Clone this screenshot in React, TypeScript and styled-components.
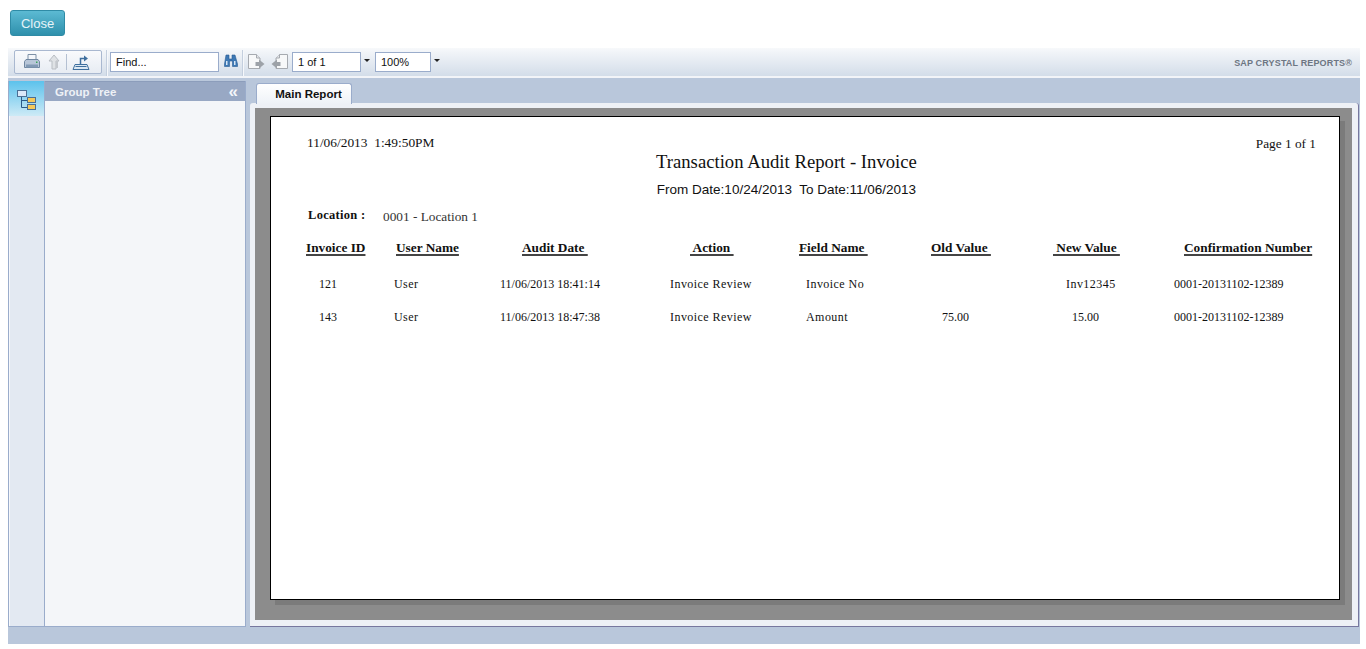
import React from 'react';
import styled, { createGlobalStyle } from 'styled-components';

const GlobalStyle = createGlobalStyle`
  * { box-sizing: border-box; }
  html, body { margin: 0; padding: 0; background: #fff; }
  body { font-family: "Liberation Sans", Arial, sans-serif; }
`;

const Page = styled.div`
  width: 1366px;
  height: 649px;
  overflow: hidden;
`;

const TopBar = styled.div`
  height: 48px;
  padding: 10px 0 0 10px;
`;

const CloseButton = styled.button`
  display: block;
  width: 55px;
  height: 26px;
  padding: 0;
  border: 1px solid #2f8ba6;
  border-radius: 3px;
  background: linear-gradient(#5cbad3, #2e90ac);
  color: #e6f4f8;
  font: 13px "Liberation Sans", Arial, sans-serif;
`;

const Viewer = styled.div`
  width: 1352px;
  margin-left: 8px;
  height: 596px;
  display: flex;
  flex-direction: column;
`;

const Toolbar = styled.div`
  flex: 0 0 30px;
  display: flex;
  align-items: flex-start;
  padding: 2px 0 0 6px;
  background: linear-gradient(#f7f9fb, #f1f4f8 15%, #d3dde9);
  border-bottom: 2px solid #f2f4f8;
  box-shadow: 0 1px 0 #aebdd4;
`;

const ButtonGroup = styled.div`
  width: 88px;
  height: 24px;
  display: flex;
  align-items: center;
  gap: 5px;
  padding-left: 8px;
  border: 1px solid #a9b8d0;
  border-radius: 2px;
  background: linear-gradient(#f9fafc, #e7ecf3);
`;

const GroupDivider = styled.span`
  width: 1px;
  height: 16px;
  margin-left: -1px;
  background: #b4c0d2;
`;

const Separator = styled.span<{ $after: number }>`
  flex: none;
  width: 1px;
  height: 26px;
  margin: 0 ${(p) => p.$after}px 0 4px;
  background: #c4cfde;
  box-shadow: 1px 0 0 #f6f8fb;
`;

const ToolInput = styled.div<{ $width: number; $left?: number }>`
  flex: none;
  width: ${(p) => p.$width}px;
  height: 20px;
  margin: 2px 0 0 ${(p) => p.$left ?? 0}px;
  padding-left: 5px;
  border: 1px solid #9aaccb;
  background: #fff;
  color: #111;
  font-size: 11px;
  line-height: 18px;
`;

const IconSlot = styled.span<{ $left: number; $width: number }>`
  flex: none;
  display: flex;
  width: ${(p) => p.$width}px;
  margin: 3px 0 0 ${(p) => p.$left}px;
`;

const DropArrow = styled.span<{ $left: number }>`
  flex: none;
  width: 0;
  height: 0;
  margin: 9px 0 0 ${(p) => p.$left}px;
  border-left: 3px solid transparent;
  border-right: 3px solid transparent;
  border-top: 3px solid #222;
`;

const Brand = styled.div`
  margin: 8px 8px 0 auto;
  color: #6d7683;
  font-size: 9px;
  font-weight: bold;
  letter-spacing: 0.15px;
  line-height: 11px;
  white-space: nowrap;
`;

const Main = styled.div`
  flex: 1;
  display: flex;
  background: #b9c7db;
  padding-top: 3px;
`;

const SideStrip = styled.div`
  flex: 0 0 37px;
  border: 1px solid #9aaccb;
  border-top: 0;
  background: #e3e9f2;
  box-shadow: inset 1px 0 0 #f6f8fb;
`;

const StripTile = styled.div`
  height: 35px;
  display: flex;
  align-items: center;
  justify-content: center;
  background: linear-gradient(#5cc2ec, #cdeaf6);
`;

const TreePanel = styled.div`
  flex: 0 0 201px;
  display: flex;
  flex-direction: column;
  border-right: 1px solid #9aaccb;
  border-bottom: 1px solid #9aaccb;
  background: #f4f6f9;
`;

const TreeHeader = styled.div`
  height: 20px;
  display: flex;
  align-items: center;
  justify-content: space-between;
  padding: 0 7px 0 10px;
  background: #98a8c4;
  border-top: 1px solid #8c9dbb;
  color: #eef1f6;
  font-size: 11.5px;
  font-weight: bold;
`;

const Collapse = styled.span`
  font-size: 17px;
  font-weight: bold;
  line-height: 14px;
  color: #f4f6fa;
`;

const ReportArea = styled.div`
  flex: 1;
  display: flex;
  flex-direction: column;
  padding: 2px 1px 0 4px;
`;

const TabRow = styled.div`
  height: 20px;
  padding-left: 6px;
  display: flex;
`;

const Tab = styled.div`
  width: 96px;
  height: 21px;
  border: 1px solid #9aaccb;
  border-bottom: 0;
  border-radius: 3px 3px 0 0;
  background: linear-gradient(#fff, #eef2f7);
  color: #111;
  font-size: 11.5px;
  font-weight: bold;
  line-height: 20px;
  text-align: center;
  padding-left: 9px;
  z-index: 1;
`;

const ReportFrame = styled.div`
  height: 524px;
  padding: 5px 6px 6px 5px;
  background: #eef1f6;
  border-radius: 3px 3px 0 0;
  border-bottom: 1px solid #77789f;
  border-right: 1px solid #77789f;
`;

const GreyDesk = styled.div`
  height: 100%;
  padding: 8px 12px 0 15px;
  background: #8c8c8c;
`;

const ReportSheet = styled.div`
  height: 484px;
  padding: 0 23px 0 35px;
  border: 1px solid #000;
  background: #fff;
  box-shadow: 5px 5px 0 #7b7b7b;
  color: #111;
  font-family: "Liberation Serif", "Times New Roman", serif;
  font-size: 12px;
`;

const HeadBlock = styled.div`
  height: 91px;
  display: grid;
  grid-template-columns: 350px auto 1fr;
`;

const Stamp = styled.div`
  padding: 19px 0 0 1px;
  font-size: 13.4px;
  line-height: 14px;
  white-space: pre;
`;

const TitleBlock = styled.div`
  text-align: center;
  padding-top: 34px;
`;

const ReportTitle = styled.div`
  font-size: 18.7px;
  line-height: 22px;
  white-space: nowrap;
`;

const DateRange = styled.div`
  margin-top: 10px;
  font-family: "Liberation Sans", Arial, sans-serif;
  font-size: 13.5px;
  line-height: 14px;
  white-space: pre;
`;

const PageNumber = styled.div`
  padding-top: 20px;
  text-align: right;
  font-size: 13.3px;
  line-height: 14px;
`;

const LocationRow = styled.div`
  display: flex;
  height: 34px;
  padding-left: 2px;
  line-height: 14px;
`;

const LocationLabel = styled.b`
  width: 75px;
  font-size: 12.5px;
  letter-spacing: 0.3px;
`;

const LocationValue = styled.span`
  padding-top: 2px;
  font-size: 13.3px;
  color: #333;
`;

const ReportTable = styled.div`
  display: grid;
  grid-template-columns: 88px 106px 170px 129px 132px 122px 121px 140px;
  grid-auto-rows: 33px;
  margin-top: -1px;
`;

const HeaderCell = styled.div<{ $indent: number }>`
  padding-left: ${(p) => p.$indent}px;
  font-weight: bold;
  font-size: 13.3px;
  line-height: 14px;
  white-space: pre;
  span {
    text-decoration: underline;
    text-decoration-thickness: 2px;
    text-underline-offset: 2px;
    text-decoration-color: #444;
  }
`;

const DataCell = styled.div<{ $indent: number; $word: boolean }>`
  padding: 3px 0 0 ${(p) => p.$indent}px;
  letter-spacing: ${(p) => (p.$word ? '0.45px' : '0')};
  line-height: 14px;
  white-space: nowrap;
`;

const StatusBar = styled.div`
  flex: 0 0 17px;
  background: #b9c7db;
`;

const PrintIcon = () => (
  <svg width="18" height="18" viewBox="0 0 18 18">
    <path d="M5 1.500h8v5H5z" fill="#f4f6fa" stroke="#7d90a6" />
    <path d="M3 6.500h12l1.500 2v6H1.500v-6z" fill="#b8c6d8" stroke="#6f86a0" />
    <path d="M3 11.500h12v3H3z" fill="#8199b4" />
    <path d="M13 8.500h1.500V10H13z" fill="#3aa45a" />
  </svg>
);

const UpIcon = () => (
  <svg width="16" height="18" viewBox="0 0 16 18">
    <path d="M8 2l5 6h-3v8H6V8H3z" fill="#dfe2e5" stroke="#b8bdc3" />
    <path d="M10 8h2v7h-2z" fill="#c4c8cd" />
  </svg>
);

const ExportIcon = () => (
  <svg width="18" height="18" viewBox="0 0 18 18">
    <path d="M1 16.500l2-5h12l2 5z" fill="#dce8f3" stroke="#3f6f9e" />
    <path d="M3.500 13.500h11" stroke="#3f6f9e" />
    <path d="M8.500 11V5.500h4" fill="none" stroke="#3f6f9e" strokeWidth="1.500" />
    <path d="M12 2.500l4 3-4 3z" fill="#3f6f9e" />
  </svg>
);

const BinocularIcon = () => (
  <svg width="15" height="15" viewBox="0 0 15 15">
    <path d="M3 2h3v4h3V2h3l2.500 9v2.500h-5V8H6.500v5.500h-5V11z" fill="#3d78b4" stroke="#2a5c94" strokeWidth="0.6" />
    <path d="M3 8h1.500v4H3zM11 8h1.500v4H11z" fill="#d6e6f5" />
  </svg>
);

const NextPageIcon = ({ flip }: { flip?: boolean }) => (
  <svg width="17" height="17" viewBox="0 0 17 17" style={flip ? { transform: 'scaleX(-1)' } : undefined}>
    <path d="M.5 1.500h8l3.500 3.500v10.500H.5z" fill="#f7f8f9" stroke="#a6aab0" />
    <path d="M8.500 1.500v3.500H12" fill="#e4e6e9" stroke="#a6aab0" />
    <path d="M11 6.500l5.500 4.500-5.500 4.500z" fill="#9da2a8" />
    <path d="M7.500 9h4v4h-4z" fill="#9da2a8" />
  </svg>
);

const TreeIcon = () => (
  <svg width="22" height="22" viewBox="0 0 22 22">
    <path d="M5.500 8v11.500H11M5.500 12.500H11" fill="none" stroke="#2b5a86" />
    <rect x="1.500" y="2.500" width="9" height="6" fill="#dbe9f8" stroke="#4b6f94" />
    <rect x="11.500" y="9.500" width="8" height="5" fill="#f5c95a" stroke="#4b6f94" />
    <rect x="11.500" y="16.500" width="8" height="5" fill="#f5c95a" stroke="#4b6f94" />
  </svg>
);

const headers = [
  { label: 'Invoice ID', indent: 0 },
  { label: 'User Name', indent: 2 },
  { label: 'Audit Date ', indent: 22 },
  { label: ' Action ', indent: 20 },
  { label: 'Field Name ', indent: 0 },
  { label: 'Old Value ', indent: 0 },
  { label: ' New Value ', indent: 0 },
  { label: 'Confirmation Number', indent: 10 },
];

const rows = [
  [
    { text: '121', indent: 13 },
    { text: 'User', indent: 0, word: true },
    { text: '11/06/2013 18:41:14', indent: 0 },
    { text: 'Invoice Review', indent: 0, word: true },
    { text: 'Invoice No', indent: 7, word: true },
    { text: '', indent: 0 },
    { text: 'Inv12345', indent: 13, word: true },
    { text: '0001-20131102-12389', indent: 0 },
  ],
  [
    { text: '143', indent: 13 },
    { text: 'User', indent: 0, word: true },
    { text: '11/06/2013 18:47:38', indent: 0 },
    { text: 'Invoice Review', indent: 0, word: true },
    { text: 'Amount', indent: 7, word: true },
    { text: '75.00', indent: 11 },
    { text: '15.00', indent: 19 },
    { text: '0001-20131102-12389', indent: 0 },
  ],
];

const App = () => {
  return (
    <Page>
      <GlobalStyle />
      <TopBar>
        <CloseButton>Close</CloseButton>
      </TopBar>
      <Viewer>
        <Toolbar>
          <ButtonGroup>
            <PrintIcon />
            <UpIcon />
            <GroupDivider />
            <ExportIcon />
          </ButtonGroup>
          <Separator $after={3} />
          <ToolInput $width={109}>Find...</ToolInput>
          <IconSlot $left={4} $width={15}>
            <BinocularIcon />
          </IconSlot>
          <Separator $after={5} />
          <IconSlot $left={0} $width={17}>
            <NextPageIcon />
          </IconSlot>
          <IconSlot $left={6} $width={17}>
            <NextPageIcon flip />
          </IconSlot>
          <ToolInput $width={69} $left={4}>1 of 1</ToolInput>
          <DropArrow $left={3} />
          <ToolInput $width={56} $left={5}>100%</ToolInput>
          <DropArrow $left={3} />
          <Brand>SAP CRYSTAL REPORTS®</Brand>
        </Toolbar>
        <Main>
          <SideStrip>
            <StripTile>
              <TreeIcon />
            </StripTile>
          </SideStrip>
          <TreePanel>
            <TreeHeader>
              Group Tree
              <Collapse>«</Collapse>
            </TreeHeader>
          </TreePanel>
          <ReportArea>
            <TabRow>
              <Tab>Main Report</Tab>
            </TabRow>
            <ReportFrame>
              <GreyDesk>
                <ReportSheet>
                  <HeadBlock>
                    <Stamp>11/06/2013  1:49:50PM</Stamp>
                    <TitleBlock>
                      <ReportTitle>Transaction Audit Report - Invoice</ReportTitle>
                      <DateRange>From Date:10/24/2013  To Date:11/06/2013</DateRange>
                    </TitleBlock>
                    <PageNumber>Page 1 of 1</PageNumber>
                  </HeadBlock>
                  <LocationRow>
                    <LocationLabel>Location :</LocationLabel>
                    <LocationValue>0001 - Location 1</LocationValue>
                  </LocationRow>
                  <ReportTable>
                    {headers.map((h) => (
                      <HeaderCell key={h.label} $indent={h.indent}>
                        <span>{h.label}</span>
                      </HeaderCell>
                    ))}
                    {rows.map((row, i) =>
                      row.map((cell, j) => (
                        <DataCell key={`cell-${i}-${j}`} $indent={cell.indent} $word={!!cell.word}>
                          {cell.text}
                        </DataCell>
                      )),
                    )}
                  </ReportTable>
                </ReportSheet>
              </GreyDesk>
            </ReportFrame>
          </ReportArea>
        </Main>
        <StatusBar />
      </Viewer>
    </Page>
  );
};

export default App;
